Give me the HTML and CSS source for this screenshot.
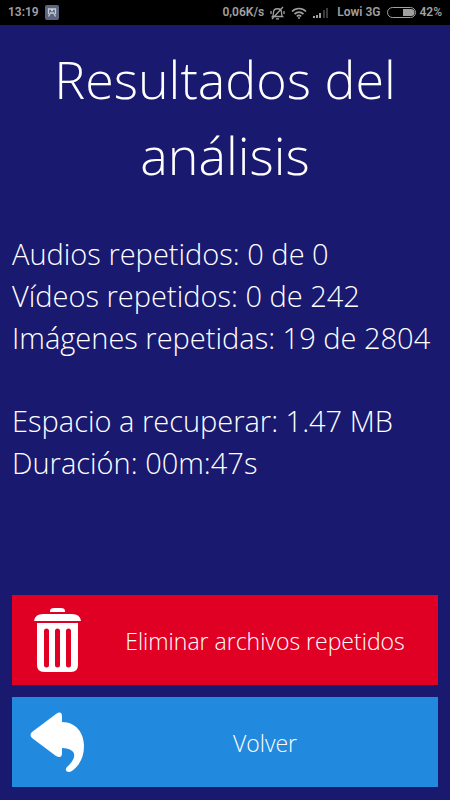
FILE: index.html
```html
<!DOCTYPE html>
<html lang="es">
<head>
<meta charset="utf-8">
<meta name="viewport" content="width=device-width, initial-scale=1">
<title>Resultados del análisis</title>
<link rel="stylesheet" href="styles.css">
</head>
<body>
<header class="status">
  <span>13:19</span>
  <svg class="status-app" width="14" height="15" viewBox="0 0 14 15" aria-hidden="true">
    <rect width="14" height="15" rx="2" fill="#5d6680"/>
    <path d="M3.500 9V4h7v5M5 8.500L3.500 11.500M9 8.500l1.500 3M5 8h4M6 5.500h2" fill="none" stroke="#c9cdd6" stroke-width="1.300"/>
  </svg>
  <span class="status-speed">0,06K/s</span>
  <svg class="status-bell" width="15" height="14" viewBox="0 0 15 14" fill="none" stroke="#a0a0a0" stroke-width="1.300" aria-hidden="true">
    <path d="M2.500 10.500c1-1 1-2 1-4 0-5 8-5 8 0 0 2 0 3 1 4zM6 12.800h3M2 13L13 1M1 5v3M14 5v3"/>
  </svg>
  <svg class="status-wifi" width="16" height="12" viewBox="0 0 16 12" fill="none" stroke="#a0a0a0" stroke-width="1.700" aria-hidden="true">
    <path d="M1 4.500c4-4 10-4 14 0M3.500 7c3-2.600 6-2.600 9 0M5.800 9.300c1.500-1.200 3-1.200 4.400 0"/>
    <circle cx="8" cy="11" r="1" fill="#a0a0a0" stroke="none"/>
  </svg>
  <svg class="status-signal" width="16" height="12" viewBox="0 0 16 12" fill="#a0a0a0" aria-hidden="true">
    <path d="M0 9h2v2H0zM3 8h2v3H3zM6 6h2v5H6z"/>
    <path d="M10 3h2v8h-2zM13 1h2v10h-2z" fill="#3c3c3c"/>
  </svg>
  <span class="status-carrier">Lowi 3G</span>
  <svg class="status-battery" width="29" height="11" viewBox="0 0 29 11" aria-hidden="true">
    <rect x=".5" y=".5" width="28" height="10" rx="5" fill="none" stroke="#a0a0a0"/>
    <path d="M16 2h8a3.500 3.500 0 0 1 0 7h-8z" fill="#a0a0a0"/>
  </svg>
  <span>42%</span>
</header>
<main class="screen">
  <h1 class="title">Resultados del análisis</h1>
  <section class="results">
    <p>Audios repetidos: 0 de 0</p>
    <p>Vídeos repetidos: 0 de 242</p>
    <p>Imágenes repetidas: 19 de 2804</p>
    <p class="summary">Espacio a recuperar: 1.47 MB</p>
    <p>Duración: 00m:47s</p>
  </section>
  <div class="actions">
    <button class="action action-delete" type="button">
      <svg class="action-icon" viewBox="0 0 90 90" aria-hidden="true">
        <path d="M38 17v-1q0-3 4-3h7q4 0 4 3v1zM22 26q1-7 9-7h29q8 0 9 7z" fill="#fff"/>
        <path fill-rule="evenodd" d="M25 28h41v42q0 7-7 7H32q-7 0-7-7zM32 36v34a2.500 2.500 0 0 0 5 0V36a2.500 2.500 0 0 0-5 0zM43 36v34a2.500 2.500 0 0 0 5 0V36a2.500 2.500 0 0 0-5 0zM54 36v34a2.500 2.500 0 0 0 5 0V36a2.500 2.500 0 0 0-5 0z" fill="#fff"/>
      </svg>
      <span class="action-label">Eliminar archivos repetidos</span>
    </button>
    <button class="action action-back" type="button">
      <svg class="action-icon" viewBox="0 0 90 90" aria-hidden="true">
        <path d="M20 35L44 17Q50 13 50 20V25C64 25 72 36 72 49C72 62 66 70 59 74.500C55 76 52 73 55 70C64 62 67 52 50 51V56Q50 62 44 59L20 41Q17 38 20 35Z" fill="#fff"/>
      </svg>
      <span class="action-label">Volver</span>
    </button>
  </div>
</main>
</body>
</html>
```
FILE: styles.css
```css
* {
  box-sizing: border-box;
}

body {
  display: flex;
  flex-direction: column;
  min-height: 100vh;
  margin: 0;
  background: #19196f;
  color: #fff;
  font-family: "Open Sans", "Noto Sans", sans-serif;
  font-weight: 300;
}

.status {
  display: flex;
  align-items: center;
  height: 25px;
  padding: 0 8px;
  background: #000;
  color: #a0a0a0;
  font: 600 12px/25px Roboto, sans-serif;
  white-space: nowrap;
}

.status-app {
  margin-left: 6px;
}

.status-speed {
  margin-left: auto;
}

.status-bell,
.status-wifi,
.status-signal {
  margin-left: 6px;
}

.status-carrier {
  margin-left: 8px;
}

.status-battery {
  margin: 0 3px 0 7px;
}

.screen {
  display: flex;
  flex: 1;
  flex-direction: column;
  padding: 16px 12px 13px;
}

.title {
  margin: 0;
  font-size: 52px;
  font-weight: 300;
  line-height: 76px;
  text-align: center;
}

.results {
  margin-top: 40px;
  font-size: 29px;
  line-height: 42px;
}

.results p {
  margin: 0;
}

.results .summary {
  margin-top: 41px;
}

.actions {
  display: grid;
  gap: 12px;
  margin-top: auto;
}

.action {
  display: flex;
  align-items: center;
  width: 100%;
  height: 90px;
  padding: 0 10px 0 0;
  border: 0;
  color: #fff;
  font: inherit;
  font-size: 23px;
}

.action-delete {
  background: #e00024;
}

.action-back {
  background: #2189de;
}

.action-icon {
  flex: none;
  width: 90px;
  height: 90px;
}

.action-label {
  flex: 1;
  padding-top: 2px;
  text-align: center;
}
```
